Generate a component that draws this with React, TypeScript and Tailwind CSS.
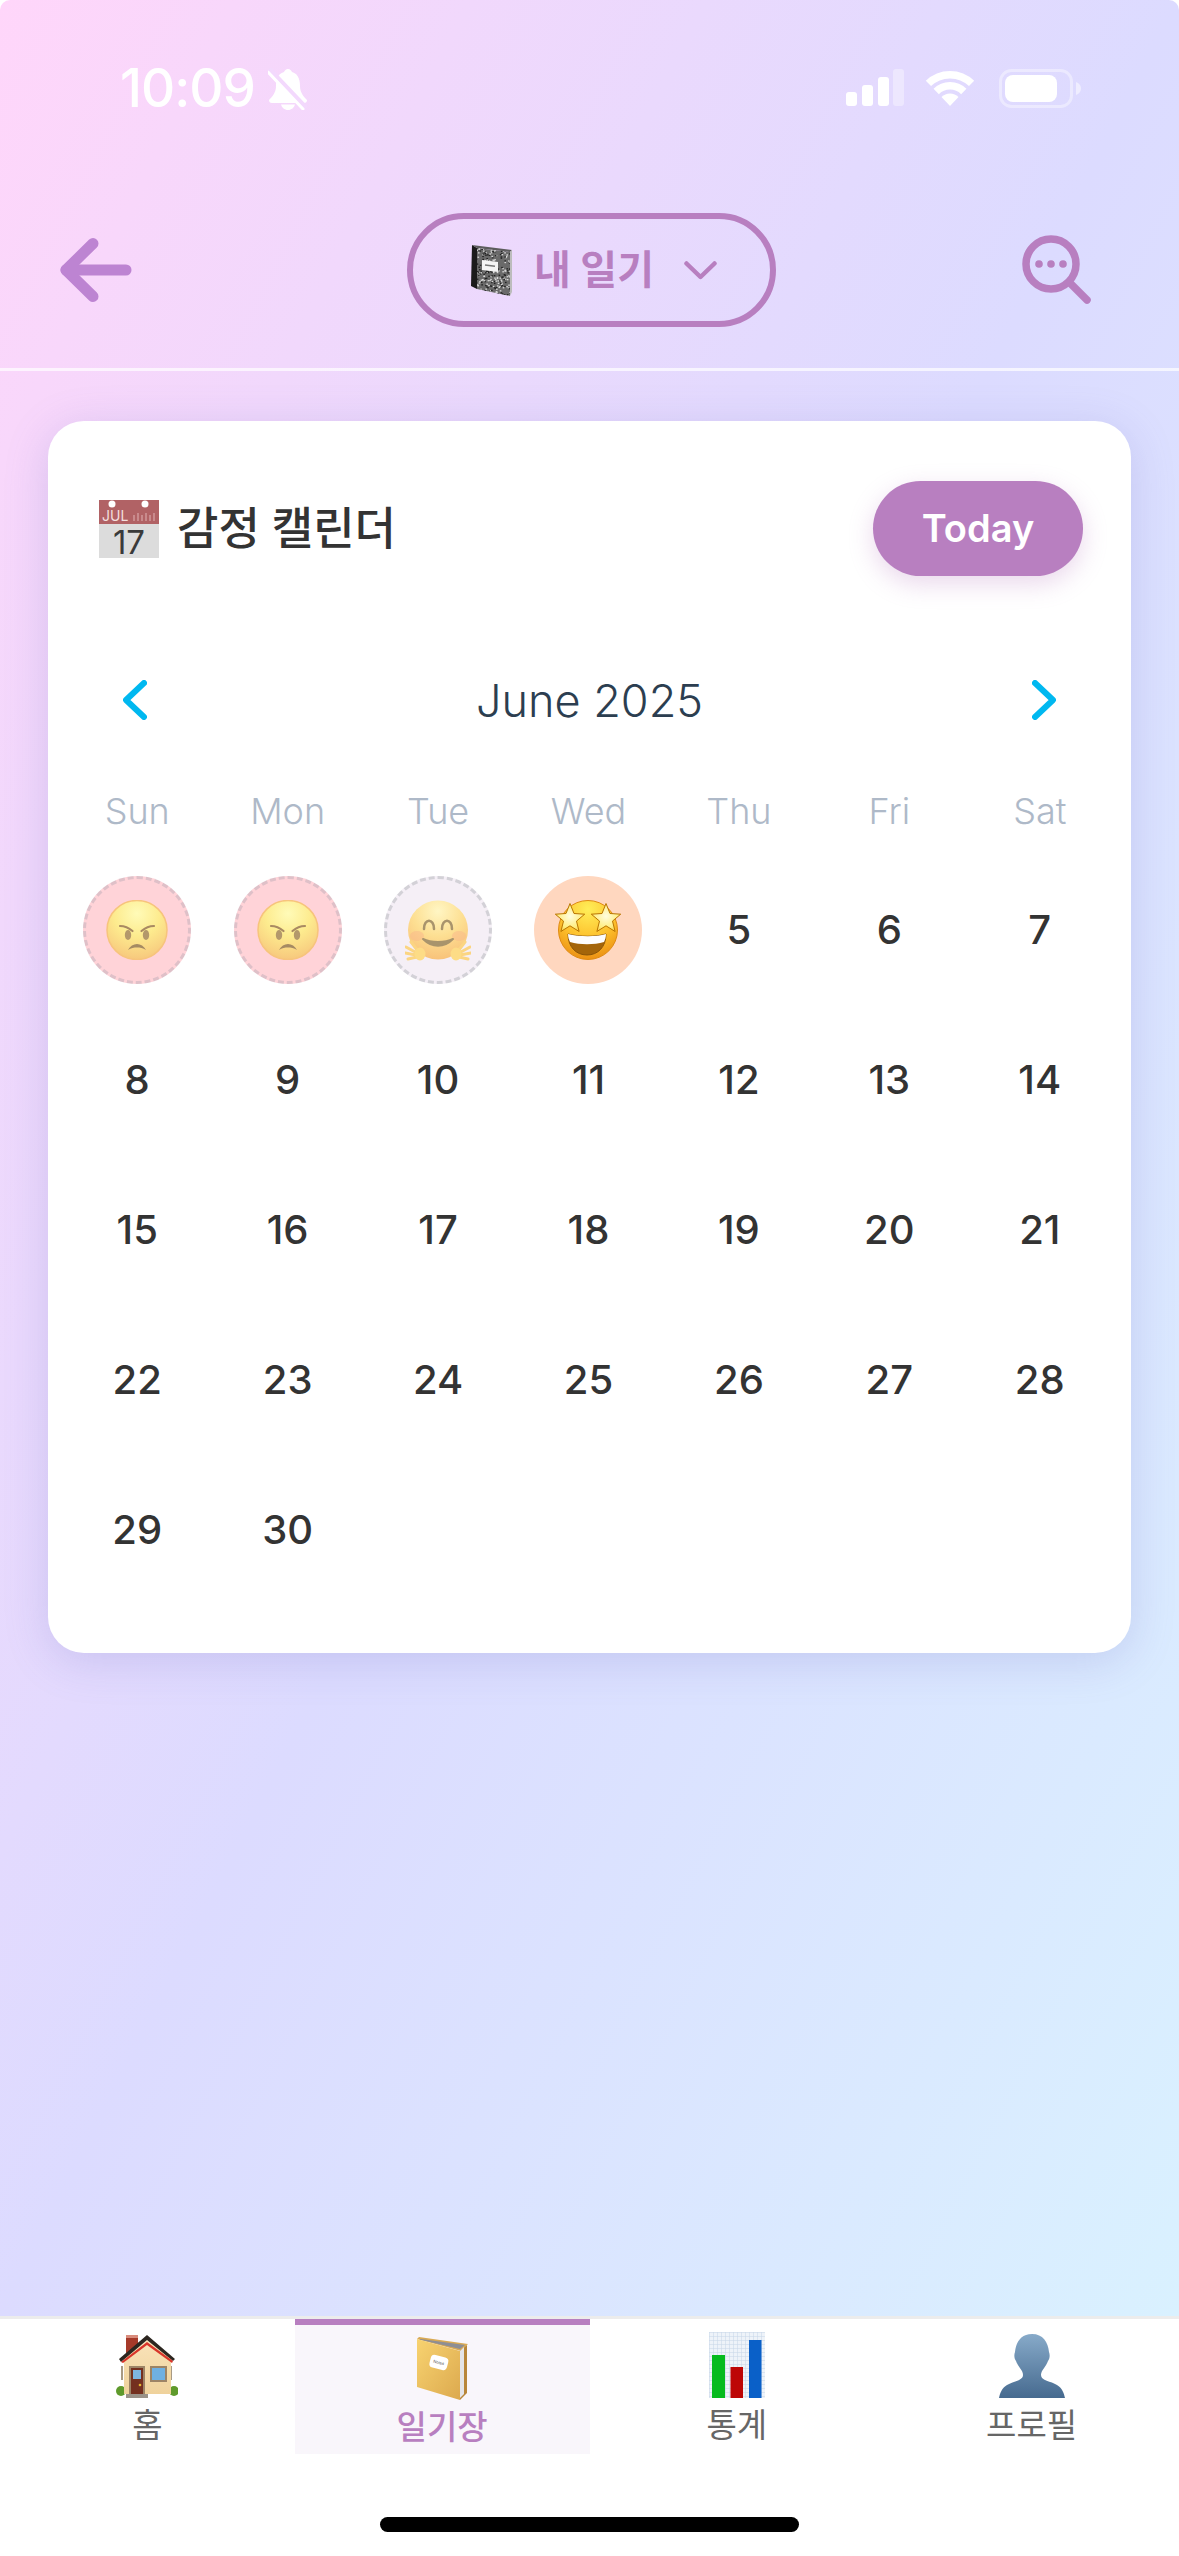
import type { ReactNode } from 'react';

const PURPLE = '#b87fc0';

const weekdays = ['Sun', 'Mon', 'Tue', 'Wed', 'Thu', 'Fri', 'Sat'];

const starPoints = (cx: number, cy: number, R: number, r: number) => {
  const pts: string[] = [];
  for (let i = 0; i < 10; i++) {
    const rad = i % 2 === 0 ? R : r;
    const a = -Math.PI / 2 + (i * Math.PI) / 5;
    pts.push(`${(cx + rad * Math.cos(a)).toFixed(1)},${(cy + rad * Math.sin(a)).toFixed(1)}`);
  }
  return pts.join(' ');
};

// speckles for the composition book cover
const specks = Array.from({ length: 320 }, (_, i) => {
  const a = Math.sin(i * 12.9898) * 43758.5453;
  const b = Math.sin(i * 78.233) * 12543.1234;
  return { x: (a - Math.floor(a)) * 41, y: (b - Math.floor(b)) * 51, light: i % 2 === 0 };
});

const BellOff = () => (
  <svg width="40" height="42" viewBox="0 0 40 42" className="ml-[13px]">
    <path d="M20 1c-2 0-3.500 1.500-4 3C9 6 8 13 8 18c0 6-3 10-7 14 0 2 1 3 3 3h32c2 0 3-1 3-3-4-4-7-8-7-14 0-5-1-12-8-14-.5-1.500-2-3-4-3z" fill="#fff" />
    <path d="M13 36.500h14c-.8 3-3.500 5.500-7 5.500s-6.200-2.500-7-5.500z" fill="#fff" />
    <path d="M1 1l37 39" stroke="#f3d9fd" strokeWidth="5" />
    <path d="M0 4l35 37" stroke="#fff" strokeWidth="3" strokeLinecap="round" />
  </svg>
);

const SignalIcon = () => (
  <svg width="58" height="37" viewBox="0 0 58 37">
    <rect x="0" y="23" width="11" height="14" rx="3" fill="#fff" />
    <rect x="16" y="16" width="11" height="21" rx="3" fill="#fff" />
    <rect x="32" y="8" width="11" height="29" rx="3" fill="#fff" />
    <rect x="47" y="0" width="11" height="37" rx="3" fill="#fff" fillOpacity="0.35" />
  </svg>
);

const WifiIcon = () => (
  <svg width="50" height="37" viewBox="0 0 50 37" fill="none">
    <path d="M3.400 14.400a31 31 0 0 1 43.200 0" stroke="#fff" strokeWidth="7.500" />
    <path d="M11.200 22.500a19.500 19.500 0 0 1 27.600 0" stroke="#fff" strokeWidth="7.500" />
    <path d="M25 37l-8.500-9a12 12 0 0 1 17 0z" fill="#fff" />
  </svg>
);

const BatteryIcon = () => (
  <svg width="82" height="39" viewBox="0 0 82 39" fill="none">
    <rect x="1.500" y="1.500" width="71" height="36" rx="11" stroke="#fff" strokeOpacity="0.4" strokeWidth="3" />
    <rect x="6" y="6" width="52" height="27" rx="8" fill="#fff" />
    <path d="M77 13c3 1 5 3.500 5 6.500s-2 5.500-5 6.500z" fill="#fff" fillOpacity="0.5" />
  </svg>
);

const BackArrow = () => (
  <svg width="72" height="64" viewBox="0 0 72 64" fill="none" stroke="#bd84d2" strokeWidth="11" strokeLinecap="round" strokeLinejoin="round">
    <path d="M33 5.500L6 32l27 26.500" />
    <path d="M6 32h60" />
  </svg>
);

const SearchDots = () => (
  <svg width="70" height="70" viewBox="0 0 70 70" fill="none">
    <circle cx="29" cy="29" r="25" stroke={PURPLE} strokeWidth="7.500" />
    <circle cx="17" cy="29" r="3.800" fill={PURPLE} />
    <circle cx="29" cy="29" r="3.800" fill={PURPLE} />
    <circle cx="41" cy="29" r="3.800" fill={PURPLE} />
    <path d="M48 48l17 17" stroke={PURPLE} strokeWidth="7.500" strokeLinecap="round" />
  </svg>
);

const Notebook = () => (
  <svg width="41" height="51" viewBox="0 0 41 51">
    <defs>
      <clipPath id="nb-cover">
        <polygon points="6,3 39,7 39,51 6,44" />
      </clipPath>
    </defs>
    <polygon points="1,0 6,3 6,44 0,41" fill="#1b1b1b" />
    <polygon points="1,0 41,5 39,7 6,3" fill="#5c5c5c" />
    <polygon points="39,7 41,5 41,47 39,51" fill="#bcbcbc" />
    <polygon points="6,3 39,7 39,51 6,44" fill="#6a6a6a" />
    <g clipPath="url(#nb-cover)">
      {specks.map((s, i) => (
        <rect key={i} x={s.x} y={s.y} width="1.600" height="1.300" fill={s.light ? '#d8d8d8' : '#222'} />
      ))}
    </g>
    <polygon points="11,15 27,17 27,27 11,25" fill="#f4f4f4" />
    <path d="M14 20l10 1.200" stroke="#777" strokeWidth="1.500" />
  </svg>
);

const CalendarIcon = () => (
  <svg width="60" height="58" viewBox="0 0 60 58" className="shrink-0 overflow-visible">
    <rect x="0" y="0" width="60" height="24" fill="#b16265" />
    <rect x="0" y="24" width="60" height="34" fill="#dcdcdc" />
    <circle cx="13" cy="4" r="3.500" fill="#fff" />
    <circle cx="46" cy="4" r="3.500" fill="#fff" />
    <text x="3" y="21" fontSize="14" fill="#f3dede" fontFamily="Inter, sans-serif">JUL</text>
    <path d="M35 21v-6M39 21v-8M43 21v-6M47 21v-8M51 21v-6M55 21v-8" stroke="#d9a5a7" strokeWidth="1.200" />
    <text x="30" y="54" fontSize="33" fill="#3a3a3a" textAnchor="middle" fontFamily="Inter, sans-serif">17</text>
  </svg>
);

const AngryFace = ({ id }: { id: string }) => (
  <svg width="62" height="60" viewBox="0 0 62 60">
    <defs>
      <radialGradient id={id} cx="50%" cy="22%" r="85%">
        <stop offset="0%" stopColor="#fffbb8" />
        <stop offset="45%" stopColor="#fdeb8e" />
        <stop offset="100%" stopColor="#f6c27a" />
      </radialGradient>
    </defs>
    <ellipse cx="31" cy="30" rx="30" ry="29.500" fill={`url(#${id})`} stroke="#f7c47c" strokeWidth="1.500" />
    <path d="M14 26c4 0 9 2 12.500 5M48 26c-4 0-9 2-12.500 5" fill="none" stroke="#a98a62" strokeWidth="2.200" strokeLinecap="round" />
    <ellipse cx="22" cy="35" rx="3.200" ry="5" fill="#b3986b" />
    <ellipse cx="40" cy="35" rx="3.200" ry="5" fill="#b3986b" />
    <path d="M22 50c2-4 5.500-6 9-6s7 2 9 6c-3-2-6-2.500-9-2.500s-6 .5-9 2.500z" fill="#a58a62" />
  </svg>
);

const HuggingFace = () => (
  <svg width="66" height="61" viewBox="0 0 66 61">
    <defs>
      <radialGradient id="hug-face" cx="50%" cy="18%" r="85%">
        <stop offset="0%" stopColor="#fff6c4" />
        <stop offset="50%" stopColor="#fddf92" />
        <stop offset="100%" stopColor="#f8c078" />
      </radialGradient>
    </defs>
    <ellipse cx="33" cy="30" rx="30" ry="29.500" fill="url(#hug-face)" />
    <ellipse cx="12" cy="36" rx="7" ry="5" fill="#f9b78b" fillOpacity="0.5" />
    <ellipse cx="54" cy="36" rx="7" ry="5" fill="#f9b78b" fillOpacity="0.5" />
    <path d="M19 29c0-11 10-11 10 0M37 29c0-11 10-11 10 0" fill="none" stroke="#a9946c" strokeWidth="2.500" strokeLinecap="round" />
    <path d="M18 39c9 9 21 9 30 0-8 4-22 4-30 0z" fill="#a9946c" stroke="#a9946c" strokeWidth="2" strokeLinejoin="round" />
    <g fill="none" stroke="#fbd582" strokeWidth="3" strokeLinecap="round">
      <path d="M1 47l11 6M0 53l11 2M3 59l9-2M6 42l7 9" />
      <path d="M65 47l-11 6M66 53l-11 2M63 59l-9-2M60 42l-7 9" />
    </g>
    <ellipse cx="15" cy="54" rx="5.500" ry="6.500" fill="#fddc86" />
    <ellipse cx="51" cy="54" rx="5.500" ry="6.500" fill="#fddc86" />
  </svg>
);

const StarFace = () => (
  <svg width="66" height="60" viewBox="0 0 66 60">
    <defs>
      <radialGradient id="star-face" cx="50%" cy="15%" r="90%">
        <stop offset="0%" stopColor="#ffee58" />
        <stop offset="55%" stopColor="#fdc02c" />
        <stop offset="100%" stopColor="#e98a10" />
      </radialGradient>
      <radialGradient id="star-fill" cx="50%" cy="45%" r="60%">
        <stop offset="0%" stopColor="#fffde0" />
        <stop offset="70%" stopColor="#ffee80" />
        <stop offset="100%" stopColor="#f9cf40" />
      </radialGradient>
    </defs>
    <circle cx="33" cy="30" r="29.500" fill="url(#star-face)" stroke="#df8a12" strokeWidth="1" />
    <path d="M13 34c12 3 28 3 38 0 0 13-8 21-19 21S13 47 13 34z" fill="#a4650a" stroke="#8a5408" strokeWidth="1" />
    <path d="M13 34c12 3 28 3 38 0 0 3-1 6-2 8-10 3-24 3-34 0-1-2-2-5-2-8z" fill="#fdfdfd" />
    <polygon points={starPoints(15, 19, 15.500, 6.800)} fill="url(#star-fill)" stroke="#b97400" strokeWidth="1" strokeLinejoin="round" />
    <polygon points={starPoints(51, 19, 15.500, 6.800)} fill="url(#star-fill)" stroke="#b97400" strokeWidth="1" strokeLinejoin="round" />
  </svg>
);

const HouseIcon = () => (
  <svg width="62" height="63" viewBox="0 0 62 63">
    <defs>
      <linearGradient id="wall" x1="0" y1="0" x2="0" y2="1">
        <stop offset="0%" stopColor="#f9e3b9" />
        <stop offset="100%" stopColor="#efd29c" />
      </linearGradient>
    </defs>
    <rect x="10" y="0" width="12" height="20" fill="#a63a2a" />
    <rect x="10" y="0" width="12" height="3" fill="#d98c7c" />
    <ellipse cx="5" cy="56" rx="5" ry="5" fill="#5f9a2c" />
    <ellipse cx="58" cy="56" rx="5" ry="5" fill="#5f9a2c" />
    <rect x="5" y="31" width="2" height="14" fill="#a89a84" />
    <rect x="54" y="31" width="2" height="14" fill="#a89a84" />
    <path d="M8 22L31 5l24 17v37H8z" fill="url(#wall)" />
    <path d="M3 24L31 0l28 24-2 2L31 5 5 27z" fill="#2c2620" />
    <path d="M5 27L31 7l26 19-1 2L31 10 7 28z" fill="#d8352a" />
    <rect x="13" y="31" width="16" height="28" fill="#9c8466" />
    <rect x="15" y="33" width="12" height="26" fill="#74301f" />
    <rect x="17" y="35" width="8" height="9" fill="#7eb5df" />
    <circle cx="24" cy="50" r="1.300" fill="#e5b630" />
    <rect x="34" y="31" width="17" height="16" fill="#9c8466" />
    <rect x="36" y="33" width="13" height="12" fill="#6fb0e2" />
    <rect x="10" y="59" width="22" height="4" fill="#9a9288" />
  </svg>
);

const LedgerIcon = () => (
  <svg width="51" height="63" viewBox="0 0 51 63">
    <defs>
      <linearGradient id="ledger" x1="0" y1="0" x2="1" y2="1">
        <stop offset="0%" stopColor="#f8d370" />
        <stop offset="100%" stopColor="#dca94e" />
      </linearGradient>
    </defs>
    <polygon points="2,0 51,7 44,14 0,2" fill="#d9a954" />
    <polygon points="4,2 48,8 43,12 2,2.500" fill="#8e8e94" />
    <polygon points="43,14 50,8 50,56 43,63" fill="#b8863a" />
    <polygon points="43,14 47,10 47,57 43,61" fill="#e4e4e8" />
    <polygon points="0,2 43,14 43,63 0,50" fill="url(#ledger)" />
    <rect x="13" y="19" width="18" height="13" rx="4" fill="#fff" transform="rotate(14 22 25)" />
    <text x="22" y="27" fontSize="4" fill="#555" textAnchor="middle" fontFamily="Inter, sans-serif" transform="rotate(14 22 25)">Notes</text>
  </svg>
);

const ChartIcon = () => (
  <svg width="56" height="66" viewBox="0 0 56 66">
    <defs>
      <pattern id="chart-grid" width="4" height="4" patternUnits="userSpaceOnUse">
        <rect width="4" height="4" fill="#eef3f9" />
        <path d="M4 0H0V4" fill="none" stroke="#c6d6e8" strokeWidth="1" />
      </pattern>
    </defs>
    <rect width="56" height="66" fill="url(#chart-grid)" />
    <rect x="3" y="23" width="13" height="43" fill="#06bb1e" />
    <rect x="21.500" y="35" width="12.500" height="31" fill="#bd0606" />
    <rect x="40" y="8" width="12.500" height="58" fill="#0a60c8" />
  </svg>
);

const BustIcon = () => (
  <svg width="66" height="64" viewBox="0 0 66 64">
    <defs>
      <linearGradient id="bust" x1="0" y1="0" x2="0" y2="1">
        <stop offset="0%" stopColor="#87aac9" />
        <stop offset="100%" stopColor="#466a8f" />
      </linearGradient>
    </defs>
    <path d="M33 0C22 0 17 8 16 18c-1 3-1 6 1 9 2 6 7 9 7 14 0 6-10 6-16 10-5 3-7 8-8 13h66c-1-5-3-10-8-13-6-4-16-4-16-10 0-5 5-8 7-14 2-3 2-6 1-9C49 8 44 0 33 0z" fill="url(#bust)" />
  </svg>
);

const moods: Record<number, { bg: string; icon: ReactNode }> = {
  1: { bg: 'bg-[#ffd3d8] border-[3px] border-dashed border-[#dfc0c8]', icon: <AngryFace id="angry-1" /> },
  2: { bg: 'bg-[#ffd3d8] border-[3px] border-dashed border-[#dfc0c8]', icon: <AngryFace id="angry-2" /> },
  3: { bg: 'bg-[#f5eff6] border-[3px] border-dashed border-[#d3d1d7]', icon: <HuggingFace /> },
  4: { bg: 'bg-[#ffd7bf]', icon: <StarFace /> },
};

const days = Array.from({ length: 30 }, (_, i) => i + 1);

const tabs = [
  { label: '홈', icon: <HouseIcon /> },
  { label: '일기장', icon: <LedgerIcon />, active: true },
  { label: '통계', icon: <ChartIcon /> },
  { label: '프로필', icon: <BustIcon /> },
];

export default function App() {
  return (
    <div className="w-[1179px] h-[2556px] flex flex-col bg-white overflow-hidden rounded-t-[10px] font-['Inter','Noto_Sans_CJK_KR',sans-serif]">
      <div className="h-[2316px] flex flex-col bg-[linear-gradient(to_bottom_right,#ffd6fa,#dcdbff_50%,#d9f1ff)]">
        {/* status bar */}
        <div className="h-[176px] shrink-0 flex items-start justify-between pl-[120px] pr-[98px] pt-[68px]">
          <div className="flex items-start">
            <span className="text-[53px] leading-[40px] font-medium text-white tracking-[-1px]">10:09</span>
            <BellOff />
          </div>
          <div className="flex items-start pt-[1px]">
            <SignalIcon />
            <div className="ml-[21px]"><WifiIcon /></div>
            <div className="ml-[24px]"><BatteryIcon /></div>
          </div>
        </div>

        {/* header */}
        <div className="h-[195px] shrink-0 flex items-center justify-between pl-[60px] pr-[87px] pb-[4px] border-b-[3px] border-white/70">
          <BackArrow />
          <div className="w-[369px] h-[114px] ml-[28px] pl-[6px] rounded-full border-[6px] border-[#b87fc0] flex items-center justify-center gap-[22px]">
            <Notebook />
            <span className="text-[40px] font-bold text-[#b87fc0] leading-none">내 일기</span>
            <svg width="33" height="19" viewBox="0 0 33 19" fill="none" stroke={PURPLE} strokeWidth="4.500" strokeLinecap="round" strokeLinejoin="round" className="ml-[8px]">
              <path d="M2.500 2.500L16.500 16 30.500 2.500" />
            </svg>
          </div>
          <SearchDots />
        </div>

        {/* calendar card */}
        <div className="mx-[48px] mt-[50px] h-[1232px] bg-white rounded-[36px] pl-[14px] pr-[16px] pt-[60px] shadow-[0_8px_44px_rgba(110,110,190,0.22)]">
          <div className="h-[95px] flex items-center justify-between pl-[34px] pr-[32px]">
            <div className="flex items-center gap-[18px] pl-[3px]">
              <CalendarIcon />
              <span className="text-[45px] font-medium text-[#333] leading-none">감정 캘린더</span>
            </div>
            <button className="w-[210px] h-[95px] rounded-full bg-[#b87fc0] text-white text-[38px] font-semibold shadow-[0_8px_24px_rgba(184,127,192,0.3)]">
              Today
            </button>
          </div>

          <div className="mt-[94px] h-[60px] flex items-center justify-between pl-[61px] pr-[59px]">
            <svg width="24" height="40" viewBox="0 0 24 40" fill="none" stroke="#00b8f0" strokeWidth="6" strokeLinecap="round" strokeLinejoin="round">
              <path d="M21 3L3 20l18 17" />
            </svg>
            <span className="text-[45px] font-light text-[#2c3e50] leading-none">June 2025</span>
            <svg width="24" height="40" viewBox="0 0 24 40" fill="none" stroke="#00b8f0" strokeWidth="6" strokeLinecap="round" strokeLinejoin="round">
              <path d="M3 3l18 17L3 37" />
            </svg>
          </div>

          <div className="mt-[54px] h-[50px] grid grid-cols-7">
            {weekdays.map((d) => (
              <div key={d} className="flex items-center justify-center text-[36px] font-light text-[#aeb9c8]">
                {d}
              </div>
            ))}
          </div>

          <div className="mt-[21px] grid grid-cols-7 auto-rows-[150px]">
            {days.map((d) => {
              const mood = moods[d];
              return (
                <div key={d} className="flex items-center justify-center">
                  {mood ? (
                    <div className={`w-[108px] h-[108px] rounded-full flex items-center justify-center ${mood.bg}`}>
                      {mood.icon}
                    </div>
                  ) : (
                    <span className="text-[40px] font-[450] text-[#333]">{d}</span>
                  )}
                </div>
              );
            })}
          </div>
        </div>
      </div>

      {/* tab bar */}
      <div className="flex-1 flex flex-col border-t-[3px] border-[#ececec]">
        <div className="h-[135px] grid grid-cols-4">
          {tabs.map((t) => (
            <div
              key={t.label}
              className={
                t.active
                  ? 'flex flex-col items-center border-t-[6px] border-[#b87fc0] bg-[#f9f6fb] pt-[12px]'
                  : 'flex flex-col items-center pt-[13px]'
              }
            >
              <div className={t.active ? 'h-[63px] flex items-end' : 'h-[66px] flex items-end'}>{t.icon}</div>
              <span className={t.active ? 'mt-[6px] text-[33px] leading-[42px] font-medium text-[#b87fc0]' : 'mt-[6px] text-[33px] leading-[42px] text-[#666]'}>
                {t.label}
              </span>
            </div>
          ))}
        </div>
        <div className="mt-[63px] mx-auto w-[419px] h-[15px] rounded-full bg-black" />
      </div>
    </div>
  );
}
